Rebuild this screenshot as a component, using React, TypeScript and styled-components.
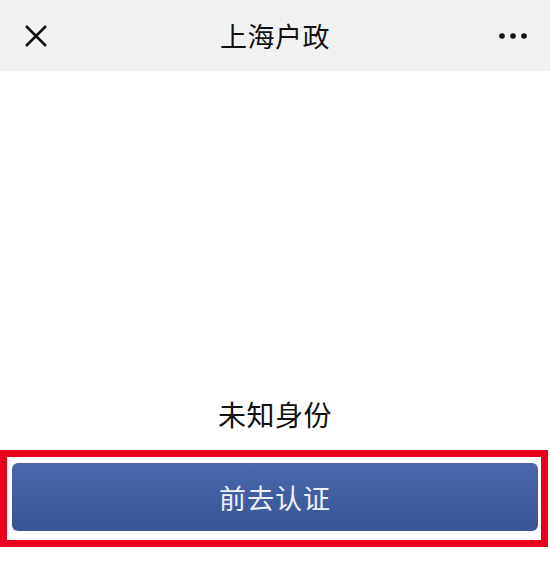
import React from "react";
import styled, { createGlobalStyle } from "styled-components";

const Global = createGlobalStyle`
  html, body { margin: 0; padding: 0; background: #ffffff; }
  body { font-family: "Noto Sans CJK SC", "Noto Sans", sans-serif; }
`;

const Page = styled.div`
  width: 550px;
  height: 586px;
  display: flex;
  flex-direction: column;
  background: #ffffff;
`;

const NavBar = styled.header`
  height: 71px;
  flex: none;
  background: #f1f1f1;
  display: grid;
  grid-template-columns: 80px 1fr 80px;
  align-items: center;
`;

const NavButton = styled.div<{ $align: "start" | "end" }>`
  display: flex;
  justify-content: ${(p) => (p.$align === "start" ? "flex-start" : "flex-end")};
  padding: ${(p) => (p.$align === "start" ? "0 0 0 24px" : "0 22px 0 0")};
  align-items: center;
`;

const Title = styled.h1`
  margin: 0;
  text-align: center;
  font-size: 27px;
  font-weight: 400;
  color: #111111;
  letter-spacing: 0.5px;
`;

const Content = styled.main`
  flex: 1;
  display: flex;
  flex-direction: column;
  justify-content: flex-end;
  padding-bottom: 39px;
`;

const Status = styled.div`
  text-align: center;
  font-size: 28px;
  color: #111111;
  line-height: 40px;
  margin-bottom: 16px;
  letter-spacing: 0.5px;
`;

const Highlight = styled.div`
  width: 548px;
  box-sizing: border-box;
  border: 7px solid #e8001c;
  padding: 6px 3px 9px 5px;
`;

const ActionButton = styled.button`
  width: 100%;
  height: 68px;
  border: none;
  border-radius: 6px;
  background: linear-gradient(180deg, #4968ad 0%, #3f5c9f 55%, #3a5595 100%);
  color: #eef0f7;
  font-family: "Noto Sans CJK SC", "Noto Sans", sans-serif;
  font-size: 27px;
  letter-spacing: 1px;
  cursor: pointer;
`;

const CloseIcon = () => (
  <svg width="24" height="24" viewBox="0 0 24 24">
    <path d="M2 2 L22 22 M22 2 L2 22" stroke="#111" strokeWidth="2.5" strokeLinecap="butt" />
  </svg>
);

const MoreIcon = () => (
  <svg width="30" height="8" viewBox="0 0 30 8">
    <circle cx="4" cy="4" r="2.8" fill="#111" />
    <circle cx="15" cy="4" r="2.8" fill="#111" />
    <circle cx="26" cy="4" r="2.8" fill="#111" />
  </svg>
);

export default function App() {
  return (
    <>
      <Global />
      <Page>
        <NavBar>
          <NavButton $align="start">
            <CloseIcon />
          </NavButton>
          <Title>上海户政</Title>
          <NavButton $align="end">
            <MoreIcon />
          </NavButton>
        </NavBar>
        <Content>
          <Status>未知身份</Status>
          <Highlight>
            <ActionButton>前去认证</ActionButton>
          </Highlight>
        </Content>
      </Page>
    </>
  );
}
